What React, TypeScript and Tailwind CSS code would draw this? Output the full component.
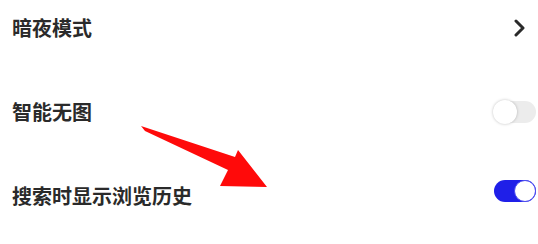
import React, { useState } from 'react';

const Toggle: React.FC<{ on: boolean; onChange: () => void }> = ({ on, onChange }) => (
  <button
    onClick={onChange}
    className={`relative w-[42px] h-[22px] rounded-full ${on ? 'bg-[#1f1fe8]' : 'bg-[#ececec]'}`}
  >
    <span
      className={`absolute top-1/2 -translate-y-1/2 rounded-full bg-white ${
        on ? 'right-0 w-[22px] h-[22px] border border-[#4a4af0]' : '-left-px w-[24px] h-[24px] shadow-[0_0_3px_rgba(0,0,0,0.25)]'
      }`}
    />
  </button>
);

export default function App() {
  const [noImage, setNoImage] = useState(false);
  const [history, setHistory] = useState(true);

  return (
    <div
      className="relative w-[538px] h-[244px] bg-white overflow-hidden text-[#2a2a2a] font-semibold"
      style={{ fontFamily: '"Noto Sans CJK SC", "Noto Sans", sans-serif' }}
    >
      <div className="flex flex-col gap-[28px] pl-3 pr-[2px]">
        {/* 暗夜模式 */}
        <div className="h-14 flex items-center justify-between">
          <span className="text-[20px]">暗夜模式</span>
          <svg width="12" height="18" viewBox="0 0 12 18" className="mr-[11px]">
            <polyline points="3,2 10,9 3,16" fill="none" stroke="#2a2a2a" strokeWidth="3" strokeLinecap="round" strokeLinejoin="round" />
          </svg>
        </div>

        {/* 智能无图 */}
        <div className="h-14 flex items-center justify-between">
          <span className="text-[20px]">智能无图</span>
          <Toggle on={noImage} onChange={() => setNoImage(!noImage)} />
        </div>

        {/* 搜索时显示浏览历史 */}
        <div className="h-14 flex items-center justify-between">
          <span className="text-[20px]">搜索时显示浏览历史</span>
          <div className="mb-[6px]">
            <Toggle on={history} onChange={() => setHistory(!history)} />
          </div>
        </div>
      </div>

      {/* red annotation arrow */}
      <svg className="absolute inset-0 pointer-events-none" width="538" height="244">
        <polygon
          points="141,126 235,157 238,150 267,187 220,186 228,170 145,131"
          fill="#ff0a0a"
        />
      </svg>
    </div>
  );
}
